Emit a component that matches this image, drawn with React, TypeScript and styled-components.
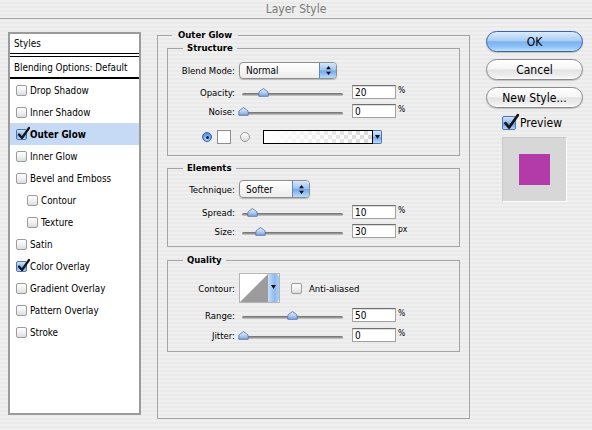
import React from 'react';
import styled, { createGlobalStyle } from 'styled-components';

const ui = `"DejaVu Sans Condensed", "DejaVu Sans", sans-serif`;
const groove = '#a4a4a4';

const GlobalStyle = createGlobalStyle`
  html, body {
    margin: 0;
    padding: 0;
  }

  body {
    width: 592px;
    height: 430px;
    overflow: hidden;
    font-family: ${ui};
    color: #000;
  }
`;

const Window = styled('div')`
  width: 592px;
  height: 430px;
  display: flex;
  flex-direction: column;
  background: repeating-linear-gradient(to bottom, #efefef 0 2px, #eaeaea 2px 4px);
`;

const TitleBar = styled('div')`
  height: 18px;
  border-bottom: 1px solid #a6a6a6;
  display: flex;
  align-items: center;
  justify-content: center;
  font-size: 12px;
  color: #7a7a7a;
`;

const Body = styled('div')`
  display: flex;
  align-items: flex-start;
  padding-left: 8px;
`;

/* ---------- left styles list ---------- */

const StyleList = styled('ul')`
  list-style: none;
  margin: 13px 0 0;
  padding: 0;
  width: 133px;
  height: 383px;
  box-sizing: border-box;
  border: 2px solid #9b9b9b;
  background: #fff;
  font-size: 9.8px;
`;

const ListHead = styled('li')`
  height: 19px;
  display: flex;
  align-items: center;
  padding-left: 4px;
  border-bottom: 4px double #000;
`;

const BlendHead = styled('li')`
  height: 20px;
  display: flex;
  align-items: center;
  padding-left: 4px;
  border-bottom: 2px solid #000;
`;

const StyleItem = styled('li')<{ $indent?: boolean; $selected?: boolean }>`
  height: 22px;
  display: flex;
  align-items: center;
  gap: 3px;
  padding-left: ${(p) => (p.$indent ? 17 : 6)}px;
  background: ${(p) => (p.$selected ? '#c6daf6' : 'transparent')};
  font-weight: ${(p) => (p.$selected ? 'bold' : 'normal')};
`;

const Box = styled('span')<{ $on?: boolean; $size?: number }>`
  position: relative;
  flex-shrink: 0;
  width: ${(p) => p.$size ?? 11}px;
  height: ${(p) => p.$size ?? 11}px;
  box-sizing: border-box;
  border-radius: 2px;
  border: 1px solid ${(p) => (p.$on ? '#4f73ad' : '#9c9c9c')};
  background: ${(p) =>
    p.$on
      ? 'linear-gradient(#d3e5fb, #8fb8ec 50%, #6b9fe3 55%, #b4d6fa)'
      : 'linear-gradient(#ffffff, #f1f1f1 50%, #dcdcdc)'};
`;

const Tick = styled('svg')`
  position: absolute;
  left: 0;
  top: -3px;
  overflow: visible;
`;

const CheckBox = ({ on, size = 11 }: { on?: boolean; size?: number }) => (
  <Box $on={on} $size={size}>
    {on && (
      <Tick width={size + 2} height={size + 2} viewBox="0 0 13 13">
        <path d="M2 7.5 L5 11 L12 1" fill="none" stroke="#151515" strokeWidth="2.2" strokeLinecap="round" strokeLinejoin="round" />
      </Tick>
    )}
  </Box>
);

const styleItems = [
  { label: 'Drop Shadow' },
  { label: 'Inner Shadow' },
  { label: 'Outer Glow', checked: true, selected: true },
  { label: 'Inner Glow' },
  { label: 'Bevel and Emboss' },
  { label: 'Contour', indent: true },
  { label: 'Texture', indent: true },
  { label: 'Satin' },
  { label: 'Color Overlay', checked: true },
  { label: 'Gradient Overlay' },
  { label: 'Pattern Overlay' },
  { label: 'Stroke' },
];

/* ---------- grouped boxes ---------- */

const Group = styled('section')<{ $h?: number; $mt?: number; $ml?: number; $w?: number }>`
  display: flex;
  flex-direction: column;
  flex-shrink: 0;
  margin-top: ${(p) => p.$mt ?? 0}px;
  margin-left: ${(p) => p.$ml ?? 0}px;
  ${(p) => (p.$w ? `width: ${p.$w}px;` : '')}
  ${(p) => (p.$h ? `height: ${p.$h}px;` : '')}
`;

const GroupHead = styled('div')<{ $lead: number }>`
  display: flex;
  height: 12px;
  line-height: 12px;
  font-size: 9.5px;
  font-weight: bold;

  &::before,
  &::after {
    content: '';
    height: 6px;
    align-self: flex-end;
    box-sizing: border-box;
    border-top: 1px solid ${groove};
  }

  &::before {
    width: ${(p) => p.$lead}px;
    border-left: 1px solid ${groove};
  }

  &::after {
    flex: 1;
    border-right: 1px solid ${groove};
  }
`;

const GroupTitle = styled('span')<{ $pad: number }>`
  padding: 0 ${(p) => p.$pad}px;
`;

const GroupBody = styled('div')<{ $pad: string }>`
  flex: 1;
  display: flex;
  flex-direction: column;
  border: 1px solid ${groove};
  border-top: none;
  padding: ${(p) => p.$pad};
`;

const Row = styled('div')<{ $h: number; $mt: number; $pl?: number }>`
  display: flex;
  align-items: center;
  height: ${(p) => p.$h}px;
  margin-top: ${(p) => p.$mt}px;
  padding-left: ${(p) => p.$pl ?? 0}px;
  font-size: 9.5px;
`;

const Label = styled('span')`
  width: 67px;
  margin-right: 4px;
  flex-shrink: 0;
  text-align: right;
  white-space: nowrap;
`;

/* ---------- popup menu ---------- */

const Popup = styled('div')<{ $w: number; $h: number }>`
  width: ${(p) => p.$w}px;
  height: ${(p) => p.$h}px;
  box-sizing: border-box;
  display: flex;
  border: 1px solid #8e8e8e;
  border-radius: 4px;
  overflow: hidden;
  background: linear-gradient(#ffffff, #f6f6f6 50%, #ececec);
  box-shadow: 0 1px 1px rgba(0, 0, 0, 0.22);
`;

const PopupText = styled('span')`
  flex: 1;
  display: flex;
  align-items: center;
  padding-left: 6px;
  font-size: 10px;
`;

const BlueCap = styled('span')<{ $w: number }>`
  width: ${(p) => p.$w}px;
  display: flex;
  align-items: center;
  justify-content: center;
  border-left: 1px solid #5f86c2;
  background: linear-gradient(#d7e8fc, #9ac2f1 48%, #72a7ea 52%, #b9dcfd);
`;

const Stepper = () => (
  <svg width="5" height="9" viewBox="0 0 5 9">
    <path d="M2.5 0 L5 3.2 L0 3.2 Z M2.5 9 L5 5.8 L0 5.8 Z" fill="#111" />
  </svg>
);

const DownArrow = () => (
  <svg width="5" height="4" viewBox="0 0 5 4">
    <path d="M0 0 L5 0 L2.5 4 Z" fill="#111" />
  </svg>
);

const Select = ({ value, w, h }: { value: string; w: number; h: number }) => (
  <Popup $w={w} $h={h}>
    <PopupText>{value}</PopupText>
    <BlueCap $w={16}>
      <Stepper />
    </BlueCap>
  </Popup>
);

/* ---------- slider + numeric field ---------- */

const SliderWrap = styled('div')`
  position: relative;
  width: 108px;
  height: 9px;
  flex-shrink: 0;
  box-sizing: border-box;
  display: flex;
  align-items: flex-end;
  padding: 0 4px 1px 3px;
`;

const Track = styled('span')`
  flex: 1;
  height: 3px;
  border-radius: 2px;
  background: linear-gradient(#6c6c6c, #9d9d9d 60%, #d4d4d4);
`;

const Thumb = styled('svg')`
  position: absolute;
  top: 0;
`;

const Field = styled('input')`
  width: 44px;
  height: 14px;
  margin-left: 5px;
  box-sizing: border-box;
  padding: 0 2px;
  border: 1px solid #a2a2a2;
  border-top-color: #6f6f6f;
  box-shadow: inset 0 1px 0 #dedede;
  background: #fff;
  font-family: ${ui};
  font-size: 10px;
  color: #000;
  outline: none;
`;

const Unit = styled('span')`
  align-self: flex-start;
  margin-left: 2px;
  font-size: 8.5px;
  line-height: 10px;
`;

const Slider = ({ frac }: { frac: number }) => (
  <SliderWrap>
    <Track />
    <Thumb width="11" height="9" viewBox="0 0 11 9" style={{ left: Math.round(frac * 100) - 1 }}>
      <defs>
        <linearGradient id="thumbFill" x1="0" y1="0" x2="0" y2="1">
          <stop offset="0" stopColor="#e4eefb" />
          <stop offset="0.55" stopColor="#b2cbee" />
          <stop offset="1" stopColor="#7fa2db" />
        </linearGradient>
      </defs>
      <path d="M0.8 8.3 L0.8 5.2 Q0.8 3.6 2.4 2.7 L5.5 0.6 L8.6 2.7 Q10.2 3.6 10.2 5.2 L10.2 8.3 Z" fill="url(#thumbFill)" stroke="#5577b0" strokeWidth="0.9" />
    </Thumb>
  </SliderWrap>
);

const SliderRow = ({ label, frac, value, unit, mt }: { label: string; frac: number; value: string; unit: string; mt: number }) => (
  <Row $h={14} $mt={mt}>
    <Label>{label}</Label>
    <Slider frac={frac} />
    <Field value={value} readOnly />
    <Unit>{unit}</Unit>
  </Row>
);

/* ---------- colour row ---------- */

const Radio = styled('span')<{ $on?: boolean; $ml?: number }>`
  width: 10px;
  height: 10px;
  box-sizing: border-box;
  margin-left: ${(p) => p.$ml ?? 0}px;
  border-radius: 50%;
  flex-shrink: 0;
  display: flex;
  align-items: center;
  justify-content: center;
  border: 1px solid ${(p) => (p.$on ? '#3f63a3' : '#9a9a9a')};
  background: ${(p) =>
    p.$on
      ? 'radial-gradient(circle at 50% 70%, #c3e0ff, #5f9be6 60%, #3f78cf)'
      : 'linear-gradient(#ffffff, #ededed 50%, #d9d9d9)'};

  &::after {
    content: '';
    width: 3px;
    height: 3px;
    border-radius: 50%;
    background: ${(p) => (p.$on ? '#0b1c3d' : 'transparent')};
  }
`;

const Swatch = styled('span')`
  width: 14px;
  height: 14px;
  box-sizing: border-box;
  margin-left: 5px;
  border: 1px solid #8d8d8d;
  background: #fff;
`;

const GradientBox = styled('span')`
  width: 110px;
  height: 14px;
  box-sizing: border-box;
  margin-left: 13px;
  border: 1px solid #000;
  background:
    linear-gradient(to right, #ffffff 5%, rgba(255, 255, 255, 0.15) 100%),
    repeating-conic-gradient(#d2d2d2 0 25%, #ffffff 0 50%) 0 0 / 8px 8px;
`;

const GradientCap = styled('span')`
  width: 9px;
  height: 14px;
  box-sizing: border-box;
  display: flex;
  align-items: center;
  justify-content: center;
  border: 1px solid #4d72ad;
  border-left: none;
  border-radius: 0 2px 2px 0;
  background: linear-gradient(#d7e8fc, #9ac2f1 48%, #72a7ea 52%, #b9dcfd);
`;

/* ---------- contour picker ---------- */

const Contour = styled('div')`
  width: 41px;
  height: 30px;
  box-sizing: border-box;
  display: flex;
  border: 1px solid #b5b5b5;
  background: #fff;
  flex-shrink: 0;
`;

const ContourCurve = styled('svg')`
  flex: 1;
`;

const ContourCap = styled('span')`
  width: 11px;
  display: flex;
  justify-content: center;
  padding-top: 11px;
  box-sizing: border-box;
  border-radius: 0 3px 3px 0;
  background: linear-gradient(to right, #c6def8, #8fb9ee 60%, #a9cff8);
`;

const AntiAlias = styled('span')`
  margin-left: 11px;
  display: flex;
  align-items: center;
  gap: 7px;
`;

/* ---------- right column ---------- */

const Side = styled('div')`
  width: 97px;
  margin-top: 12px;
  margin-left: 16px;
  display: flex;
  flex-direction: column;
  gap: 7px;
`;

const AquaButton = styled('button')<{ $primary?: boolean }>`
  height: 21px;
  padding: 0;
  border-radius: 11px;
  border: 1px solid ${(p) => (p.$primary ? '#3c63a3' : '#8b8b8b')};
  background: ${(p) =>
    p.$primary
      ? 'linear-gradient(#dcecfd, #a9cef6 45%, #7ab2ef 52%, #8fc3f7 80%, #c4e3fd)'
      : 'linear-gradient(#ffffff, #f6f6f6 45%, #e4e4e4 52%, #ececec 80%, #fbfbfb)'};
  box-shadow: 0 1px 1px rgba(0, 0, 0, 0.2);
  font-family: ${ui};
  font-size: 12px;
  color: #000;
`;

const PreviewToggle = styled('label')`
  margin-top: 1px;
  padding-left: 16px;
  display: flex;
  align-items: center;
  gap: 4px;
  font-size: 12px;
`;

const PreviewWell = styled('div')`
  margin-left: 16px;
  width: 65px;
  height: 65px;
  box-sizing: border-box;
  display: flex;
  align-items: center;
  justify-content: center;
  background: #d7d7d7;
  border: 1px solid #c9c9c9;
  border-right-color: #fff;
  border-bottom-color: #fff;
`;

const PreviewChip = styled('span')`
  width: 31px;
  height: 31px;
  background: #b23ba9;
`;

export default function App() {
  return (
    <Window>
      <GlobalStyle />
      <TitleBar>Layer Style</TitleBar>
      <Body>
        <StyleList>
          <ListHead>Styles</ListHead>
          <BlendHead>Blending Options: Default</BlendHead>
          {styleItems.map((it) => (
            <StyleItem key={it.label} $indent={it.indent} $selected={it.selected}>
              <CheckBox on={it.checked} />
              {it.label}
            </StyleItem>
          ))}
        </StyleList>

        <Group $ml={16} $mt={10} $w={313} $h={390}>
          <GroupHead $lead={15}>
            <GroupTitle $pad={6}>Outer Glow</GroupTitle>
          </GroupHead>
          <GroupBody $pad="1px 9px 0">
            <Group>
              <GroupHead $lead={16}>
                <GroupTitle $pad={4}>Structure</GroupTitle>
              </GroupHead>
              <GroupBody $pad="0 0 11px">
                <Row $h={17} $mt={8}>
                  <Label>Blend Mode:</Label>
                  <Select value="Normal" w={98} h={17} />
                </Row>
                <SliderRow label="Opacity:" frac={0.2} value="20" unit="%" mt={6} />
                <SliderRow label="Noise:" frac={0} value="0" unit="%" mt={5} />
                <Row $h={14} $mt={12} $pl={34}>
                  <Radio $on />
                  <Swatch />
                  <Radio $ml={9} />
                  <GradientBox />
                  <GradientCap>
                    <DownArrow />
                  </GradientCap>
                </Row>
              </GroupBody>
            </Group>

            <Group $mt={6}>
              <GroupHead $lead={16}>
                <GroupTitle $pad={4}>Elements</GroupTitle>
              </GroupHead>
              <GroupBody $pad="0 0 8px">
                <Row $h={18} $mt={6}>
                  <Label>Technique:</Label>
                  <Select value="Softer" w={71} h={18} />
                </Row>
                <SliderRow label="Spread:" frac={0.09} value="10" unit="%" mt={7} />
                <SliderRow label="Size:" frac={0.17} value="30" unit="px" mt={5} />
              </GroupBody>
            </Group>

            <Group $mt={7}>
              <GroupHead $lead={16}>
                <GroupTitle $pad={4}>Quality</GroupTitle>
              </GroupHead>
              <GroupBody $pad="0 0 9px">
                <Row $h={30} $mt={7}>
                  <Label>Contour:</Label>
                  <Contour>
                    <ContourCurve viewBox="0 0 29 28" preserveAspectRatio="none">
                      <path d="M0 28 L29 0 L29 28 Z" fill="#9c9c9c" />
                    </ContourCurve>
                    <ContourCap>
                      <DownArrow />
                    </ContourCap>
                  </Contour>
                  <AntiAlias>
                    <CheckBox />
                    Anti-aliased
                  </AntiAlias>
                </Row>
                <SliderRow label="Range:" frac={0.49} value="50" unit="%" mt={5} />
                <SliderRow label="Jitter:" frac={0} value="0" unit="%" mt={6} />
              </GroupBody>
            </Group>
          </GroupBody>
        </Group>

        <Side>
          <AquaButton $primary>OK</AquaButton>
          <AquaButton>Cancel</AquaButton>
          <AquaButton>New Style...</AquaButton>
          <PreviewToggle>
            <CheckBox on size={14} />
            Preview
          </PreviewToggle>
          <PreviewWell>
            <PreviewChip />
          </PreviewWell>
        </Side>
      </Body>
    </Window>
  );
}
